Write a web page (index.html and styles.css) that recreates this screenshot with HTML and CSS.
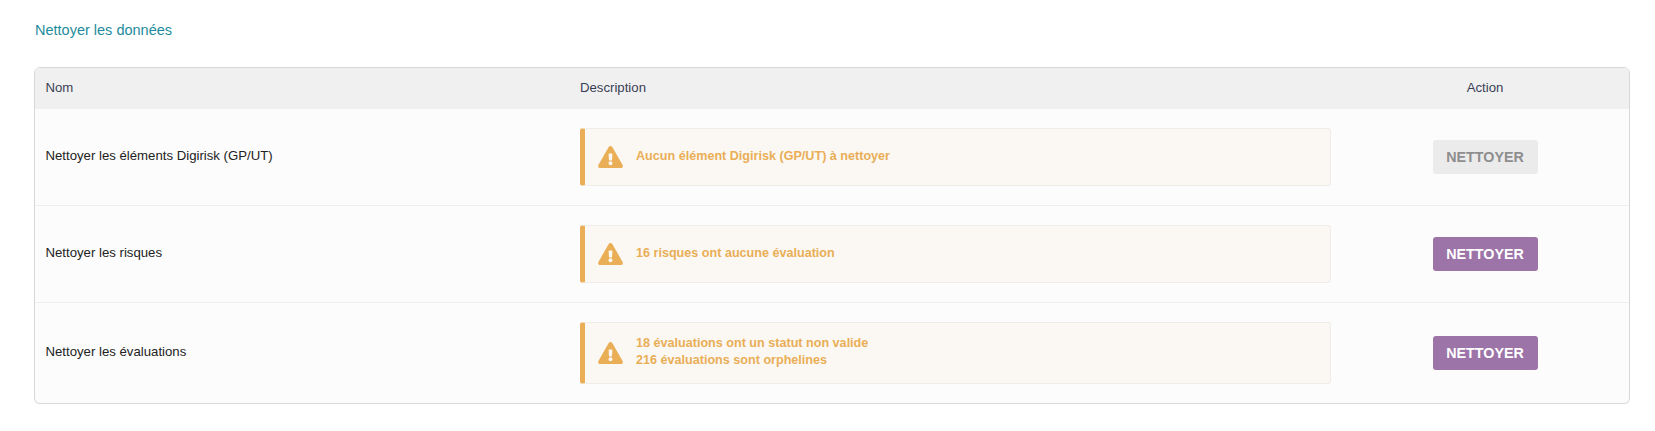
FILE: index.html
```html
<!DOCTYPE html>
<html lang="fr">
<head>
<meta charset="utf-8">
<title>Nettoyer les données</title>
<link rel="stylesheet" href="styles.css">
</head>
<body>
<h2 class="title">Nettoyer les données</h2>
<div class="table-wrap">
<table class="grid">
<colgroup><col class="col-name"><col class="col-desc"><col class="col-action"></colgroup>
<thead>
<tr><th class="name">Nom</th><th class="desc">Description</th><th class="action">Action</th></tr>
</thead>
<tbody>
<tr>
<td class="name">Nettoyer les éléments Digirisk (GP/UT)</td>
<td class="desc"><div class="notice"><svg class="notice-icon" viewBox="0 0 576 512"><path fill="currentColor" d="M569.517 440.013C587.975 472.007 564.806 512 527.94 512H48.054c-36.937 0-59.999-40.055-41.577-71.987L246.423 24.035c18.467-32.009 64.72-31.951 83.154 0l239.94 416.028zM288 354c-25.405 0-46 20.595-46 46s20.595 46 46 46 46-20.595 46-46-20.595-46-46-46zm-43.673-165.346l7.418 136c.347 6.364 5.609 11.346 11.982 11.346h48.546c6.373 0 11.635-4.982 11.982-11.346l7.418-136c.375-6.874-5.098-12.654-11.982-12.654h-63.383c-6.884 0-12.356 5.78-11.981 12.654z"/></svg><div class="notice-text">Aucun élément Digirisk (GP/UT) à nettoyer</div></div></td>
<td class="action"><button class="btn btn-off" type="button">NETTOYER</button></td>
</tr>
<tr>
<td class="name">Nettoyer les risques</td>
<td class="desc"><div class="notice"><svg class="notice-icon" viewBox="0 0 576 512"><path fill="currentColor" d="M569.517 440.013C587.975 472.007 564.806 512 527.94 512H48.054c-36.937 0-59.999-40.055-41.577-71.987L246.423 24.035c18.467-32.009 64.72-31.951 83.154 0l239.94 416.028zM288 354c-25.405 0-46 20.595-46 46s20.595 46 46 46 46-20.595 46-46-20.595-46-46-46zm-43.673-165.346l7.418 136c.347 6.364 5.609 11.346 11.982 11.346h48.546c6.373 0 11.635-4.982 11.982-11.346l7.418-136c.375-6.874-5.098-12.654-11.982-12.654h-63.383c-6.884 0-12.356 5.78-11.981 12.654z"/></svg><div class="notice-text">16 risques ont aucune évaluation</div></div></td>
<td class="action"><button class="btn" type="button">NETTOYER</button></td>
</tr>
<tr>
<td class="name">Nettoyer les évaluations</td>
<td class="desc"><div class="notice"><svg class="notice-icon" viewBox="0 0 576 512"><path fill="currentColor" d="M569.517 440.013C587.975 472.007 564.806 512 527.94 512H48.054c-36.937 0-59.999-40.055-41.577-71.987L246.423 24.035c18.467-32.009 64.72-31.951 83.154 0l239.94 416.028zM288 354c-25.405 0-46 20.595-46 46s20.595 46 46 46 46-20.595 46-46-20.595-46-46-46zm-43.673-165.346l7.418 136c.347 6.364 5.609 11.346 11.982 11.346h48.546c6.373 0 11.635-4.982 11.982-11.346l7.418-136c.375-6.874-5.098-12.654-11.982-12.654h-63.383c-6.884 0-12.356 5.78-11.981 12.654z"/></svg><div class="notice-text">18 évaluations ont un statut non valide<br>216 évaluations sont orphelines</div></div></td>
<td class="action"><button class="btn" type="button">NETTOYER</button></td>
</tr>
</tbody>
</table>
</div>
</body>
</html>
```
FILE: styles.css
```css
* { box-sizing: border-box; }
html, body { margin: 0; background: #fff; }
body {
  padding: 21px 25px 0 34px;
  font-family: "Liberation Sans", Arial, sans-serif;
  font-size: 13.2px;
  color: #222;
}
.title {
  margin: 0 0 28px 1px;
  font-size: 14.5px;
  font-weight: 400;
  line-height: 18px;
  color: #1e8b9b;
}
.table-wrap {
  border: 1px solid #d8d8d8;
  border-radius: 6px;
  overflow: hidden;
  background: #fcfcfc;
  box-shadow: 0 1px 1px rgba(0,0,0,.04);
}
.grid { width: 100%; border-collapse: separate; border-spacing: 0; table-layout: fixed; }
.col-name { width: 535px; }
.col-action { width: 288px; }
thead tr { height: 41px; background: #f0f0f0; }
th { font-weight: 400; color: #3a3f55; padding: 0 10px 2px; text-align: left; }
td { padding: 19px 10px; vertical-align: middle; }
tbody tr + tr td { border-top: 1px solid #eeeeee; }
td.name { padding: 17px 10px 20px 10.5px; }
th.name { padding-left: 10.5px; }
th.action { text-align: center; }
.notice {
  display: flex;
  align-items: center;
  min-height: 58px;
  padding: 12px 13px 11px;
  background: #fbf8f4;
  border: 1px solid #efedea;
  border-left: 5px solid #e9ae56;
  border-radius: 3px;
  color: #e9ae56;
  font-size: 12.6px;
  font-weight: 700;
  line-height: 17px;
}
.notice-icon { width: 25px; height: 22px; flex: none; margin: 0 13px 1px 0; }
.notice-text { padding-bottom: 3px; }
.btn {
  display: block;
  width: 105px;
  height: 34px;
  margin: 0 auto;
  padding: 0 0 1px;
  border: 0;
  border-radius: 3px;
  background: #9d74a8;
  color: #fff;
  font: 700 14.3px "Liberation Sans", Arial, sans-serif;
}
.btn-off { background: #ebebeb; color: #8e8e8e; }
```
